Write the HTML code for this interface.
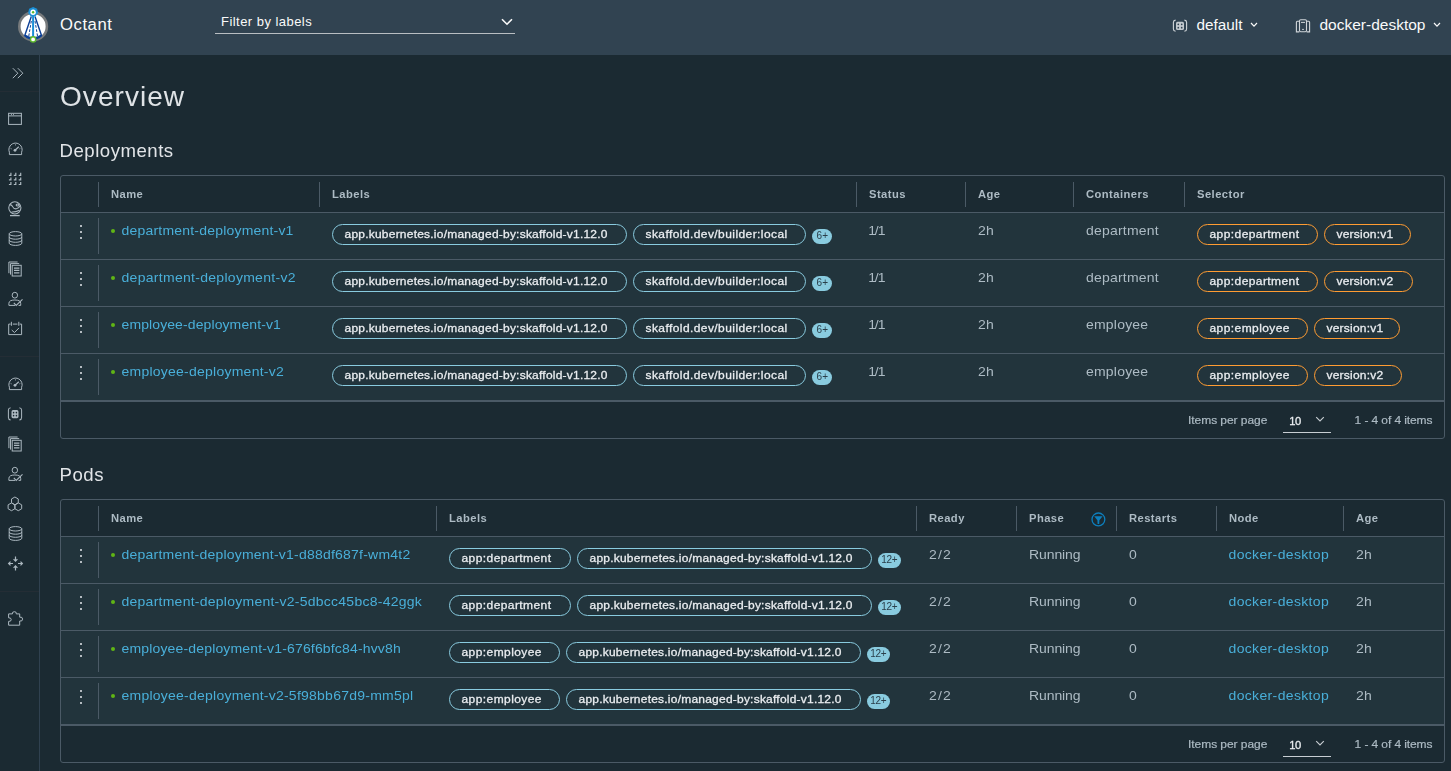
<!DOCTYPE html><html><head><meta charset="utf-8"><style>
html,body{margin:0;padding:0;}
body{width:1451px;height:771px;overflow:hidden;position:relative;background:#1b2a32;font-family:"Liberation Sans",sans-serif;}
.a{position:absolute;box-sizing:border-box;}
.t{position:absolute;white-space:nowrap;}
.chip{position:absolute;box-sizing:border-box;height:21px;border-radius:11px;border:1px solid #89cbdf;}
.badge{position:absolute;box-sizing:border-box;height:15px;border-radius:8px;background:#89cbdf;}
svg{position:absolute;overflow:visible;}
</style></head><body>
<div class="a" style="left:0px;top:0px;width:1451px;height:55px;background:#314351"></div>
<svg style="left:14px;top:4px" width="40" height="44" viewBox="0 0 40 44">
<circle cx="19.1" cy="22.4" r="13.8" fill="#fff" stroke="#777a7c" stroke-width="2.6"/>
<path d="M10.3 32.2 Q19.1 39.8 28 32.2 L27 30.6 Q19.1 35.6 11.3 30.6 Z" fill="#0b3f96"/>
<path d="M17.3 12.6 L10.6 32 M21 12.6 L27.7 32" stroke="#0b3f96" stroke-width="1.4" fill="none"/>
<path d="M17.3 17 L14.8 32 M21 17 L23.5 32" stroke="#0b3f96" stroke-width="1" stroke-dasharray="2.6 1.6" fill="none"/>
<line x1="19.1" y1="9" x2="19.1" y2="34" stroke="#1b8fd6" stroke-width="2"/>
<polygon points="19.1,2.9 23.1,4.8 24.1,9.1 21.3,12.5 16.9,12.5 14.1,9.1 15.1,4.8" fill="#1b8fd6"/>
<circle cx="19.1" cy="8.2" r="2.7" fill="#fff"/><circle cx="19.1" cy="8.2" r="1.2" fill="#5cb82c"/>
<circle cx="19.1" cy="35.4" r="2.6" fill="#fff" stroke="#5cb82c" stroke-width="1.4"/>
</svg>
<div class="t" style="left:60px;top:17.06px;font-size:16.7px;line-height:16.7px;color:#fafafa;font-weight:normal;letter-spacing:0.55px;">Octant</div>
<div class="t" style="left:221px;top:14.90px;font-size:13px;line-height:13px;color:#fafafa;font-weight:normal;letter-spacing:0.46px;">Filter by labels</div>
<div class="a" style="left:215px;top:33px;width:300px;height:1px;background:#b9bec2"></div>
<svg style="left:501px;top:18px" width="12" height="8" viewBox="0 0 12 8"><path d="M1 1.2 L6 6.2 L11 1.2" stroke="#fafafa" stroke-width="1.6" fill="none"/></svg>
<svg style="left:1168px;top:14px" width="24" height="22" viewBox="0 0 24 22" fill="none" stroke="#d0d5d9" stroke-width="1.1">
<path d="M7.6 6.1 Q5.4 6.4 5.4 8.2 V15 Q5.4 16.9 7.6 17.3 M16.4 6.1 Q18.6 6.4 18.6 8.2 V15 Q18.6 16.9 16.4 17.3"/>
<rect x="8" y="7.7" width="8" height="8.4" rx="1.6" fill="#c3c9ce" stroke="none"/>
<circle cx="10.3" cy="10.3" r="0.85" fill="#314351" stroke="none"/><circle cx="13.7" cy="10.3" r="0.85" fill="#314351" stroke="none"/>
<circle cx="10.3" cy="13.7" r="0.85" fill="#314351" stroke="none"/><circle cx="13.7" cy="13.7" r="0.85" fill="#314351" stroke="none"/>
</svg>
<div class="t" style="left:1196.5px;top:17.15px;font-size:15.3px;line-height:15.3px;color:#fafafa;font-weight:normal;letter-spacing:0px;">default</div>
<svg style="left:1250px;top:22px" width="8" height="6" viewBox="0 0 8 6"><path d="M1 1 L4 4.2 L7 1" stroke="#fafafa" stroke-width="1.2" fill="none"/></svg>
<svg style="left:1291px;top:14px" width="24" height="22" viewBox="0 0 24 22" fill="none" stroke="#d0d5d9" stroke-width="1.1">
<rect x="8.5" y="5.8" width="7" height="12" rx="1.2"/>
<path d="M10 8.4 H14" stroke-width="1"/>
<ellipse cx="12" cy="15.4" rx="0.9" ry="0.6" fill="#d0d5d9" stroke="none"/>
<path d="M8.4 7.2 H6.3 Q5.4 7.2 5.4 8.2 V17.9 H8.4 M15.6 7.2 H17.7 Q18.6 7.2 18.6 8.2 V17.9 H15.6"/>
</svg>
<div class="t" style="left:1319.5px;top:16.98px;font-size:15.5px;line-height:15.5px;color:#fafafa;font-weight:normal;letter-spacing:0px;">docker-desktop</div>
<svg style="left:1433px;top:22px" width="8" height="6" viewBox="0 0 8 6"><path d="M1 1 L4 4.2 L7 1" stroke="#fafafa" stroke-width="1.2" fill="none"/></svg>
<div style="position:absolute;left:0;top:0;width:1451px;height:771px;will-change:transform">
<div class="a" style="left:39px;top:55px;width:1px;height:716px;background:#304150"></div>
<div class="a" style="left:0px;top:91px;width:39px;height:1px;background:#242d35"></div>
<div class="a" style="left:0px;top:356px;width:39px;height:1px;background:#242d35"></div>
<div class="a" style="left:0px;top:591px;width:39px;height:1px;background:#242d35"></div>
<svg style="left:11px;top:66px" width="14" height="14" viewBox="0 0 14 14" fill="none" stroke="#acb8c0" stroke-width="1.0"><path d="M1.8 2.2 L6.8 7.2 L1.8 12.2 M6.8 2.2 L11.8 7.2 L6.8 12.2"/></svg>
<svg style="left:8px;top:112px" width="15" height="14" viewBox="0 0 15 14" fill="none" stroke="#acb8c0" stroke-width="1"><rect x="0.6" y="1.3" width="12.8" height="11.1"/><path d="M0.6 3.9 H13.4"/><path d="M3 2.6 H4 M5 2.6 H6" stroke-width="0.9"/></svg>
<svg style="left:8px;top:142px" width="15" height="14" viewBox="0 0 15 14" fill="none" stroke="#acb8c0" stroke-width="1"><path d="M1.4 12.6 V10.2 A6.6 6.6 0 1 1 13.6 10.2 V12.6 Z"/><path d="M2.6 6.3 L3.6 6.9 M12.4 6.3 L11.4 6.9 M7.5 2.4 V3.4" stroke-width="0.9"/><path d="M7 8.2 L10.8 4.8" stroke-width="1.2"/><circle cx="7" cy="8.3" r="1.4" fill="#acb8c0" stroke="none"/></svg>
<svg style="left:8px;top:171px" width="15" height="15" viewBox="0 0 15 15" fill="none" stroke="#acb8c0" stroke-width="1"><path d="M2.90 1.80 V4.30 H0.90" stroke-width="1.2"/><path d="M7.80 1.80 V4.30 H5.80" stroke-width="1.2"/><path d="M12.70 1.80 V4.30 H10.70" stroke-width="1.2"/><path d="M2.90 6.40 V8.90 H0.90" stroke-width="1.2"/><path d="M7.80 6.40 V8.90 H5.80" stroke-width="1.2"/><path d="M12.70 6.40 V8.90 H10.70" stroke-width="1.2"/><path d="M2.90 11.00 V13.50 H0.90" stroke-width="1.2"/><path d="M7.80 11.00 V13.50 H5.80" stroke-width="1.2"/><path d="M12.70 11.00 V13.50 H10.70" stroke-width="1.2"/></svg>
<svg style="left:8px;top:201px" width="15" height="16" viewBox="0 0 15 16" fill="none" stroke="#acb8c0" stroke-width="1.05"><circle cx="6.85" cy="6.85" r="6.1"/><path d="M1.6 3.6 Q3.6 3.6 4.6 5.6 Q5.8 8.2 8.4 7.8 Q11 7.3 12.3 4.6 M3.6 11 Q7.5 11.2 11.6 9.2"/><ellipse cx="9.6" cy="3.9" rx="1.5" ry="1"/><path d="M2 14.6 H11.7" stroke-width="1.3"/></svg>
<svg style="left:8px;top:231px" width="15" height="15" viewBox="0 0 15 15" fill="none" stroke="#acb8c0" stroke-width="1"><ellipse cx="7.5" cy="2.8" rx="6.3" ry="2.2"/><path d="M1.2 2.8 V12.2 A6.3 2.2 0 0 0 13.8 12.2 V2.8 M1.2 6 A6.3 2.2 0 0 0 13.8 6 M1.2 9.1 A6.3 2.2 0 0 0 13.8 9.1"/></svg>
<svg style="left:8px;top:261px" width="15" height="15" viewBox="0 0 15 15" fill="none" stroke="#acb8c0" stroke-width="1"><path d="M0.9 12.2 V1 H9.6 M2.5 13.6 V2.6 H11.2"/><rect x="4.2" y="4.3" width="9" height="10.7"/><path d="M6 7.1 H11.4 M6 9.4 H11.4 M6 11.8 H11.4" stroke-width="1.2"/></svg>
<svg style="left:8px;top:291px" width="15" height="15" viewBox="0 0 15 15" fill="none" stroke="#acb8c0" stroke-width="1"><ellipse cx="6.85" cy="4.2" rx="2.7" ry="2.9"/><path d="M7 14.4 H0.9 V12.4 Q0.9 9 6.85 9 Q12.7 9 12.7 12.4 V14.4 H10.6"/><path d="M5.8 11.8 L8.2 14.4 L14.5 8.3" stroke-width="1.1"/></svg>
<svg style="left:8px;top:321px" width="15" height="15" viewBox="0 0 15 15" fill="none" stroke="#acb8c0" stroke-width="1"><path d="M2.6 3.1 H0.7 V13.6 H13.6 V3.1 H11.7 M3.4 0.8 V4.8 M10.8 0.8 V4.8 M4.8 3.1 H9.4"/><path d="M3.7 9 L6.5 11.5 L11 6.9"/></svg>
<svg style="left:8px;top:377px" width="15" height="14" viewBox="0 0 15 14" fill="none" stroke="#acb8c0" stroke-width="1"><path d="M1.4 12.6 V10.2 A6.6 6.6 0 1 1 13.6 10.2 V12.6 Z"/><path d="M2.6 6.3 L3.6 6.9 M12.4 6.3 L11.4 6.9 M7.5 2.4 V3.4" stroke-width="0.9"/><path d="M7 8.2 L10.8 4.8" stroke-width="1.2"/><circle cx="7" cy="8.3" r="1.4" fill="#acb8c0" stroke="none"/></svg>
<svg style="left:3px;top:400.9px" width="24" height="24.2" viewBox="0 0 24 22" preserveAspectRatio="none" fill="none" stroke="#acb8c0" stroke-width="1.0"><path d="M7.6 6.1 Q5.4 6.4 5.4 8.2 V15 Q5.4 16.9 7.6 17.3 M16.4 6.1 Q18.6 6.4 18.6 8.2 V15 Q18.6 16.9 16.4 17.3"/><rect x="8.5" y="8.2" width="7" height="7.4" rx="1.5" fill="#acb8c0" stroke="none"/><circle cx="10.6" cy="10.5" r="0.8" fill="#1b2a32" stroke="none"/><circle cx="13.4" cy="10.5" r="0.8" fill="#1b2a32" stroke="none"/><circle cx="10.6" cy="13.3" r="0.8" fill="#1b2a32" stroke="none"/><circle cx="13.4" cy="13.3" r="0.8" fill="#1b2a32" stroke="none"/></svg>
<svg style="left:8px;top:436px" width="15" height="15" viewBox="0 0 15 15" fill="none" stroke="#acb8c0" stroke-width="1"><path d="M0.9 12.2 V1 H9.6 M2.5 13.6 V2.6 H11.2"/><rect x="4.2" y="4.3" width="9" height="10.7"/><path d="M6 7.1 H11.4 M6 9.4 H11.4 M6 11.8 H11.4" stroke-width="1.2"/></svg>
<svg style="left:8px;top:466px" width="15" height="15" viewBox="0 0 15 15" fill="none" stroke="#acb8c0" stroke-width="1"><ellipse cx="6.85" cy="4.2" rx="2.7" ry="2.9"/><path d="M7 14.4 H0.9 V12.4 Q0.9 9 6.85 9 Q12.7 9 12.7 12.4 V14.4 H10.6"/><path d="M5.8 11.8 L8.2 14.4 L14.5 8.3" stroke-width="1.1"/></svg>
<svg style="left:8px;top:496px" width="15" height="15" viewBox="0 0 15 15" fill="none" stroke="#acb8c0" stroke-width="1"><polygon points="6.90,8.80 3.52,6.85 3.52,2.95 6.90,1.00 10.28,2.95 10.28,6.85"/><polygon points="3.50,14.70 0.12,12.75 0.12,8.85 3.50,6.90 6.88,8.85 6.88,12.75"/><polygon points="10.30,14.70 6.92,12.75 6.92,8.85 10.30,6.90 13.68,8.85 13.68,12.75"/></svg>
<svg style="left:8px;top:526px" width="15" height="15" viewBox="0 0 15 15" fill="none" stroke="#acb8c0" stroke-width="1"><ellipse cx="7.5" cy="2.8" rx="6.3" ry="2.2"/><path d="M1.2 2.8 V12.2 A6.3 2.2 0 0 0 13.8 12.2 V2.8 M1.2 6 A6.3 2.2 0 0 0 13.8 6 M1.2 9.1 A6.3 2.2 0 0 0 13.8 9.1"/></svg>
<svg style="left:8px;top:556px" width="15" height="15" viewBox="0 0 15 15" fill="none" stroke="#acb8c0" stroke-width="1.2"><path d="M7.5 0.5 V5 M5.6 3.2 L7.5 5.1 L9.4 3.2 M7.5 14.5 V10 M5.6 11.8 L7.5 9.9 L9.4 11.8 M0.6 7.5 H5 M2.5 5.6 L0.6 7.5 L2.5 9.4 M14.4 7.5 H10 M12.5 5.6 L14.4 7.5 L12.5 9.4"/></svg>
<svg style="left:8px;top:611px" width="16" height="15" viewBox="0 0 16 15" fill="none" stroke="#acb8c0" stroke-width="1"><path d="M0.6 2.9 H4.4 Q4 0.7 6.4 0.7 Q8.8 0.7 8.3 2.9 H11.7 V6.2 Q14.6 5.6 14.6 8.1 Q14.6 10.6 11.7 10 V14.2 H0.6 V10.4 Q3.2 10.6 3.2 8.6 Q3.2 6.6 0.6 6.8 Z"/></svg>
<div class="t" style="left:60px;top:82.80px;font-size:28px;line-height:28px;color:#dfe3e6;font-weight:normal;letter-spacing:1.05px;">Overview</div>
<div class="t" style="left:59.6px;top:142.36px;font-size:18.6px;line-height:18.6px;color:#e2e5e8;font-weight:normal;letter-spacing:0.5px;">Deployments</div>
<div class="a" style="left:60px;top:175px;width:1385px;height:264px;border:1px solid #4b5a66;border-radius:3px;background:#1b2a32"></div>
<div class="a" style="left:61px;top:213px;width:1383px;height:188px;background:#22343c"></div>
<div class="a" style="left:61px;top:212px;width:1383px;height:1px;background:#4b5a66"></div>
<div class="a" style="left:98px;top:182px;width:1px;height:25px;background:#4b5a66"></div>
<div class="t" style="left:111px;top:189.12px;font-size:11.2px;line-height:11.2px;color:#adbbc4;font-weight:bold;letter-spacing:0.45px;">Name</div>
<div class="a" style="left:319px;top:182px;width:1px;height:25px;background:#4b5a66"></div>
<div class="t" style="left:332px;top:189.12px;font-size:11.2px;line-height:11.2px;color:#adbbc4;font-weight:bold;letter-spacing:0.45px;">Labels</div>
<div class="a" style="left:856px;top:182px;width:1px;height:25px;background:#4b5a66"></div>
<div class="t" style="left:869px;top:189.12px;font-size:11.2px;line-height:11.2px;color:#adbbc4;font-weight:bold;letter-spacing:0.45px;">Status</div>
<div class="a" style="left:965px;top:182px;width:1px;height:25px;background:#4b5a66"></div>
<div class="t" style="left:978px;top:189.12px;font-size:11.2px;line-height:11.2px;color:#adbbc4;font-weight:bold;letter-spacing:0.45px;">Age</div>
<div class="a" style="left:1073px;top:182px;width:1px;height:25px;background:#4b5a66"></div>
<div class="t" style="left:1086px;top:189.12px;font-size:11.2px;line-height:11.2px;color:#adbbc4;font-weight:bold;letter-spacing:0.45px;">Containers</div>
<div class="a" style="left:1184px;top:182px;width:1px;height:25px;background:#4b5a66"></div>
<div class="t" style="left:1197px;top:189.12px;font-size:11.2px;line-height:11.2px;color:#adbbc4;font-weight:bold;letter-spacing:0.45px;">Selector</div>
<div class="a" style="left:98px;top:182px;width:1px;height:25px;background:#4b5a66"></div>
<div class="a" style="left:61px;top:259px;width:1383px;height:1px;background:#4b5a66"></div>
<div class="a" style="left:98px;top:218px;width:1px;height:36px;background:#4b5a66"></div>
<div class="a" style="left:79.8px;top:225.1px;width:2.4px;height:2.4px;background:#e6e9ec;border-radius:50%"></div>
<div class="a" style="left:79.8px;top:230.85px;width:2.4px;height:2.4px;background:#e6e9ec;border-radius:50%"></div>
<div class="a" style="left:79.8px;top:236.6px;width:2.4px;height:2.4px;background:#e6e9ec;border-radius:50%"></div>
<div class="a" style="left:111px;top:229px;width:4px;height:4px;background:#60b515;border-radius:50%"></div><div class="t" style="left:121.5px;top:223.35px;font-size:14px;line-height:14px;color:#49afd9;font-weight:normal;letter-spacing:0.2px;transform:scaleY(0.88);transform-origin:0 11.85px;">department-deployment-v1</div>
<div class="chip" style="left:332px;top:224px;width:295px;border-color:#89cbdf"></div><div class="t" style="left:344.5px;top:227.74px;font-size:12px;line-height:12px;color:#eaedf0;font-weight:normal;letter-spacing:0.22px;-webkit-text-stroke:0.3px #eaedf0;transform:scaleY(0.86);transform-origin:0 10.16px">app.kubernetes.io/managed-by:skaffold-v1.12.0</div>
<div class="chip" style="left:633px;top:224px;width:173px;border-color:#89cbdf"></div><div class="t" style="left:645.5px;top:227.74px;font-size:12px;line-height:12px;color:#eaedf0;font-weight:normal;letter-spacing:0.42px;-webkit-text-stroke:0.3px #eaedf0;transform:scaleY(0.86);transform-origin:0 10.16px">skaffold.dev/builder:local</div>
<div class="badge" style="left:812px;top:229px;width:20px"></div><div class="t" style="left:816.6px;top:231.13px;font-size:10px;line-height:10px;color:#2a3f4a;font-weight:normal;letter-spacing:0px;">6+</div>
<div class="t" style="left:868.2px;top:223.35px;font-size:14px;line-height:14px;color:#adbbc4;font-weight:normal;letter-spacing:-1.1px;transform:scaleY(0.88);transform-origin:0 11.85px;">1/1</div>
<div class="t" style="left:978px;top:223.35px;font-size:14px;line-height:14px;color:#adbbc4;font-weight:normal;letter-spacing:0.2px;transform:scaleY(0.88);transform-origin:0 11.85px;">2h</div>
<div class="t" style="left:1086px;top:223.35px;font-size:14px;line-height:14px;color:#adbbc4;font-weight:normal;letter-spacing:0.2px;transform:scaleY(0.88);transform-origin:0 11.85px;">department</div>
<div class="chip" style="left:1197px;top:224px;width:121px;border-color:#ff9c32"></div><div class="t" style="left:1209.5px;top:227.74px;font-size:12px;line-height:12px;color:#eaedf0;font-weight:normal;letter-spacing:0.42px;-webkit-text-stroke:0.3px #eaedf0;transform:scaleY(0.86);transform-origin:0 10.16px">app:department</div>
<div class="chip" style="left:1324px;top:224px;width:87px;border-color:#ff9c32"></div><div class="t" style="left:1336.5px;top:227.74px;font-size:12px;line-height:12px;color:#eaedf0;font-weight:normal;letter-spacing:0.22px;-webkit-text-stroke:0.3px #eaedf0;transform:scaleY(0.86);transform-origin:0 10.16px">version:v1</div>
<div class="a" style="left:61px;top:306px;width:1383px;height:1px;background:#4b5a66"></div>
<div class="a" style="left:98px;top:265px;width:1px;height:36px;background:#4b5a66"></div>
<div class="a" style="left:79.8px;top:272.1px;width:2.4px;height:2.4px;background:#e6e9ec;border-radius:50%"></div>
<div class="a" style="left:79.8px;top:277.85px;width:2.4px;height:2.4px;background:#e6e9ec;border-radius:50%"></div>
<div class="a" style="left:79.8px;top:283.6px;width:2.4px;height:2.4px;background:#e6e9ec;border-radius:50%"></div>
<div class="a" style="left:111px;top:276px;width:4px;height:4px;background:#60b515;border-radius:50%"></div><div class="t" style="left:121.5px;top:270.35px;font-size:14px;line-height:14px;color:#49afd9;font-weight:normal;letter-spacing:0.29px;transform:scaleY(0.88);transform-origin:0 11.85px;">department-deployment-v2</div>
<div class="chip" style="left:332px;top:271px;width:295px;border-color:#89cbdf"></div><div class="t" style="left:344.5px;top:274.74px;font-size:12px;line-height:12px;color:#eaedf0;font-weight:normal;letter-spacing:0.22px;-webkit-text-stroke:0.3px #eaedf0;transform:scaleY(0.86);transform-origin:0 10.16px">app.kubernetes.io/managed-by:skaffold-v1.12.0</div>
<div class="chip" style="left:633px;top:271px;width:173px;border-color:#89cbdf"></div><div class="t" style="left:645.5px;top:274.74px;font-size:12px;line-height:12px;color:#eaedf0;font-weight:normal;letter-spacing:0.42px;-webkit-text-stroke:0.3px #eaedf0;transform:scaleY(0.86);transform-origin:0 10.16px">skaffold.dev/builder:local</div>
<div class="badge" style="left:812px;top:276px;width:20px"></div><div class="t" style="left:816.6px;top:278.14px;font-size:10px;line-height:10px;color:#2a3f4a;font-weight:normal;letter-spacing:0px;">6+</div>
<div class="t" style="left:868.2px;top:270.35px;font-size:14px;line-height:14px;color:#adbbc4;font-weight:normal;letter-spacing:-1.1px;transform:scaleY(0.88);transform-origin:0 11.85px;">1/1</div>
<div class="t" style="left:978px;top:270.35px;font-size:14px;line-height:14px;color:#adbbc4;font-weight:normal;letter-spacing:0.2px;transform:scaleY(0.88);transform-origin:0 11.85px;">2h</div>
<div class="t" style="left:1086px;top:270.35px;font-size:14px;line-height:14px;color:#adbbc4;font-weight:normal;letter-spacing:0.2px;transform:scaleY(0.88);transform-origin:0 11.85px;">department</div>
<div class="chip" style="left:1197px;top:271px;width:121px;border-color:#ff9c32"></div><div class="t" style="left:1209.5px;top:274.74px;font-size:12px;line-height:12px;color:#eaedf0;font-weight:normal;letter-spacing:0.42px;-webkit-text-stroke:0.3px #eaedf0;transform:scaleY(0.86);transform-origin:0 10.16px">app:department</div>
<div class="chip" style="left:1324px;top:271px;width:89px;border-color:#ff9c32"></div><div class="t" style="left:1336.5px;top:274.74px;font-size:12px;line-height:12px;color:#eaedf0;font-weight:normal;letter-spacing:0.22px;-webkit-text-stroke:0.3px #eaedf0;transform:scaleY(0.86);transform-origin:0 10.16px">version:v2</div>
<div class="a" style="left:61px;top:353px;width:1383px;height:1px;background:#4b5a66"></div>
<div class="a" style="left:98px;top:312px;width:1px;height:36px;background:#4b5a66"></div>
<div class="a" style="left:79.8px;top:319.1px;width:2.4px;height:2.4px;background:#e6e9ec;border-radius:50%"></div>
<div class="a" style="left:79.8px;top:324.85px;width:2.4px;height:2.4px;background:#e6e9ec;border-radius:50%"></div>
<div class="a" style="left:79.8px;top:330.6px;width:2.4px;height:2.4px;background:#e6e9ec;border-radius:50%"></div>
<div class="a" style="left:111px;top:323px;width:4px;height:4px;background:#60b515;border-radius:50%"></div><div class="t" style="left:121.5px;top:317.35px;font-size:14px;line-height:14px;color:#49afd9;font-weight:normal;letter-spacing:0.1px;transform:scaleY(0.88);transform-origin:0 11.85px;">employee-deployment-v1</div>
<div class="chip" style="left:332px;top:318px;width:295px;border-color:#89cbdf"></div><div class="t" style="left:344.5px;top:321.74px;font-size:12px;line-height:12px;color:#eaedf0;font-weight:normal;letter-spacing:0.22px;-webkit-text-stroke:0.3px #eaedf0;transform:scaleY(0.86);transform-origin:0 10.16px">app.kubernetes.io/managed-by:skaffold-v1.12.0</div>
<div class="chip" style="left:633px;top:318px;width:173px;border-color:#89cbdf"></div><div class="t" style="left:645.5px;top:321.74px;font-size:12px;line-height:12px;color:#eaedf0;font-weight:normal;letter-spacing:0.42px;-webkit-text-stroke:0.3px #eaedf0;transform:scaleY(0.86);transform-origin:0 10.16px">skaffold.dev/builder:local</div>
<div class="badge" style="left:812px;top:323px;width:20px"></div><div class="t" style="left:816.6px;top:325.14px;font-size:10px;line-height:10px;color:#2a3f4a;font-weight:normal;letter-spacing:0px;">6+</div>
<div class="t" style="left:868.2px;top:317.35px;font-size:14px;line-height:14px;color:#adbbc4;font-weight:normal;letter-spacing:-1.1px;transform:scaleY(0.88);transform-origin:0 11.85px;">1/1</div>
<div class="t" style="left:978px;top:317.35px;font-size:14px;line-height:14px;color:#adbbc4;font-weight:normal;letter-spacing:0.2px;transform:scaleY(0.88);transform-origin:0 11.85px;">2h</div>
<div class="t" style="left:1086px;top:317.35px;font-size:14px;line-height:14px;color:#adbbc4;font-weight:normal;letter-spacing:0.2px;transform:scaleY(0.88);transform-origin:0 11.85px;">employee</div>
<div class="chip" style="left:1197px;top:318px;width:111px;border-color:#ff9c32"></div><div class="t" style="left:1209.5px;top:321.74px;font-size:12px;line-height:12px;color:#eaedf0;font-weight:normal;letter-spacing:0.42px;-webkit-text-stroke:0.3px #eaedf0;transform:scaleY(0.86);transform-origin:0 10.16px">app:employee</div>
<div class="chip" style="left:1314px;top:318px;width:86px;border-color:#ff9c32"></div><div class="t" style="left:1326.5px;top:321.74px;font-size:12px;line-height:12px;color:#eaedf0;font-weight:normal;letter-spacing:0.22px;-webkit-text-stroke:0.3px #eaedf0;transform:scaleY(0.86);transform-origin:0 10.16px">version:v1</div>
<div class="a" style="left:61px;top:400px;width:1383px;height:1px;background:#4b5a66"></div>
<div class="a" style="left:98px;top:359px;width:1px;height:36px;background:#4b5a66"></div>
<div class="a" style="left:79.8px;top:366.1px;width:2.4px;height:2.4px;background:#e6e9ec;border-radius:50%"></div>
<div class="a" style="left:79.8px;top:371.85px;width:2.4px;height:2.4px;background:#e6e9ec;border-radius:50%"></div>
<div class="a" style="left:79.8px;top:377.6px;width:2.4px;height:2.4px;background:#e6e9ec;border-radius:50%"></div>
<div class="a" style="left:111px;top:370px;width:4px;height:4px;background:#60b515;border-radius:50%"></div><div class="t" style="left:121.5px;top:364.35px;font-size:14px;line-height:14px;color:#49afd9;font-weight:normal;letter-spacing:0.24px;transform:scaleY(0.88);transform-origin:0 11.85px;">employee-deployment-v2</div>
<div class="chip" style="left:332px;top:365px;width:295px;border-color:#89cbdf"></div><div class="t" style="left:344.5px;top:368.74px;font-size:12px;line-height:12px;color:#eaedf0;font-weight:normal;letter-spacing:0.22px;-webkit-text-stroke:0.3px #eaedf0;transform:scaleY(0.86);transform-origin:0 10.16px">app.kubernetes.io/managed-by:skaffold-v1.12.0</div>
<div class="chip" style="left:633px;top:365px;width:173px;border-color:#89cbdf"></div><div class="t" style="left:645.5px;top:368.74px;font-size:12px;line-height:12px;color:#eaedf0;font-weight:normal;letter-spacing:0.42px;-webkit-text-stroke:0.3px #eaedf0;transform:scaleY(0.86);transform-origin:0 10.16px">skaffold.dev/builder:local</div>
<div class="badge" style="left:812px;top:370px;width:20px"></div><div class="t" style="left:816.6px;top:372.14px;font-size:10px;line-height:10px;color:#2a3f4a;font-weight:normal;letter-spacing:0px;">6+</div>
<div class="t" style="left:868.2px;top:364.35px;font-size:14px;line-height:14px;color:#adbbc4;font-weight:normal;letter-spacing:-1.1px;transform:scaleY(0.88);transform-origin:0 11.85px;">1/1</div>
<div class="t" style="left:978px;top:364.35px;font-size:14px;line-height:14px;color:#adbbc4;font-weight:normal;letter-spacing:0.2px;transform:scaleY(0.88);transform-origin:0 11.85px;">2h</div>
<div class="t" style="left:1086px;top:364.35px;font-size:14px;line-height:14px;color:#adbbc4;font-weight:normal;letter-spacing:0.2px;transform:scaleY(0.88);transform-origin:0 11.85px;">employee</div>
<div class="chip" style="left:1197px;top:365px;width:111px;border-color:#ff9c32"></div><div class="t" style="left:1209.5px;top:368.74px;font-size:12px;line-height:12px;color:#eaedf0;font-weight:normal;letter-spacing:0.42px;-webkit-text-stroke:0.3px #eaedf0;transform:scaleY(0.86);transform-origin:0 10.16px">app:employee</div>
<div class="chip" style="left:1314px;top:365px;width:88px;border-color:#ff9c32"></div><div class="t" style="left:1326.5px;top:368.74px;font-size:12px;line-height:12px;color:#eaedf0;font-weight:normal;letter-spacing:0.22px;-webkit-text-stroke:0.3px #eaedf0;transform:scaleY(0.86);transform-origin:0 10.16px">version:v2</div>
<div class="a" style="left:61px;top:401px;width:1383px;height:1px;background:#4b5a66"></div>
<div class="t" style="left:1188px;top:414.34px;font-size:12px;line-height:12px;color:#adbbc4;font-weight:normal;letter-spacing:-0.05px;-webkit-text-stroke:0.2px #adbbc4;transform:scaleY(0.9);transform-origin:0 10.16px;">Items per page</div>
<div class="t" style="left:1289.3px;top:415.82px;font-size:11.2px;line-height:11.2px;color:#eaedf0;font-weight:normal;letter-spacing:-0.4px;-webkit-text-stroke:0.3px #eaedf0">10</div>
<svg style="left:1315px;top:416px" width="10" height="7" viewBox="0 0 10 7"><path d="M1.2 1.2 L5 5 L8.8 1.2" stroke="#c8ced3" stroke-width="1.1" fill="none"/></svg>
<div class="a" style="left:1283px;top:432px;width:48px;height:1px;background:#c8ced3"></div>
<div class="t" style="left:1354.6px;top:414.34px;font-size:12px;line-height:12px;color:#adbbc4;font-weight:normal;letter-spacing:-0.1px;-webkit-text-stroke:0.2px #adbbc4;transform:scaleY(0.9);transform-origin:0 10.16px;">1 - 4 of 4 items</div>
<div class="t" style="left:59.6px;top:466.36px;font-size:18.6px;line-height:18.6px;color:#e2e5e8;font-weight:normal;letter-spacing:0.5px;">Pods</div>
<div class="a" style="left:60px;top:499px;width:1385px;height:264px;border:1px solid #4b5a66;border-radius:3px;background:#1b2a32"></div>
<div class="a" style="left:61px;top:537px;width:1383px;height:188px;background:#22343c"></div>
<div class="a" style="left:61px;top:536px;width:1383px;height:1px;background:#4b5a66"></div>
<div class="a" style="left:98px;top:506px;width:1px;height:25px;background:#4b5a66"></div>
<div class="t" style="left:111px;top:513.12px;font-size:11.2px;line-height:11.2px;color:#adbbc4;font-weight:bold;letter-spacing:0.45px;">Name</div>
<div class="a" style="left:436px;top:506px;width:1px;height:25px;background:#4b5a66"></div>
<div class="t" style="left:449px;top:513.12px;font-size:11.2px;line-height:11.2px;color:#adbbc4;font-weight:bold;letter-spacing:0.45px;">Labels</div>
<div class="a" style="left:916px;top:506px;width:1px;height:25px;background:#4b5a66"></div>
<div class="t" style="left:929px;top:513.12px;font-size:11.2px;line-height:11.2px;color:#adbbc4;font-weight:bold;letter-spacing:0.45px;">Ready</div>
<div class="a" style="left:1016px;top:506px;width:1px;height:25px;background:#4b5a66"></div>
<div class="t" style="left:1029px;top:513.12px;font-size:11.2px;line-height:11.2px;color:#adbbc4;font-weight:bold;letter-spacing:0.45px;">Phase</div>
<div class="a" style="left:1116px;top:506px;width:1px;height:25px;background:#4b5a66"></div>
<div class="t" style="left:1129px;top:513.12px;font-size:11.2px;line-height:11.2px;color:#adbbc4;font-weight:bold;letter-spacing:0.45px;">Restarts</div>
<div class="a" style="left:1216px;top:506px;width:1px;height:25px;background:#4b5a66"></div>
<div class="t" style="left:1229px;top:513.12px;font-size:11.2px;line-height:11.2px;color:#adbbc4;font-weight:bold;letter-spacing:0.45px;">Node</div>
<div class="a" style="left:1343px;top:506px;width:1px;height:25px;background:#4b5a66"></div>
<div class="t" style="left:1356px;top:513.12px;font-size:11.2px;line-height:11.2px;color:#adbbc4;font-weight:bold;letter-spacing:0.45px;">Age</div>
<div class="a" style="left:98px;top:506px;width:1px;height:25px;background:#4b5a66"></div>
<div class="a" style="left:61px;top:583px;width:1383px;height:1px;background:#4b5a66"></div>
<div class="a" style="left:98px;top:542px;width:1px;height:36px;background:#4b5a66"></div>
<div class="a" style="left:79.8px;top:549.1px;width:2.4px;height:2.4px;background:#e6e9ec;border-radius:50%"></div>
<div class="a" style="left:79.8px;top:554.85px;width:2.4px;height:2.4px;background:#e6e9ec;border-radius:50%"></div>
<div class="a" style="left:79.8px;top:560.6px;width:2.4px;height:2.4px;background:#e6e9ec;border-radius:50%"></div>
<div class="a" style="left:111px;top:553px;width:4px;height:4px;background:#60b515;border-radius:50%"></div><div class="t" style="left:121.5px;top:547.35px;font-size:14px;line-height:14px;color:#49afd9;font-weight:normal;letter-spacing:0.22px;transform:scaleY(0.88);transform-origin:0 11.85px;">department-deployment-v1-d88df687f-wm4t2</div>
<div class="chip" style="left:449px;top:548px;width:122px;border-color:#89cbdf"></div><div class="t" style="left:461.5px;top:551.74px;font-size:12px;line-height:12px;color:#eaedf0;font-weight:normal;letter-spacing:0.42px;-webkit-text-stroke:0.3px #eaedf0;transform:scaleY(0.86);transform-origin:0 10.16px">app:department</div>
<div class="chip" style="left:577px;top:548px;width:295px;border-color:#89cbdf"></div><div class="t" style="left:589.5px;top:551.74px;font-size:12px;line-height:12px;color:#eaedf0;font-weight:normal;letter-spacing:0.22px;-webkit-text-stroke:0.3px #eaedf0;transform:scaleY(0.86);transform-origin:0 10.16px">app.kubernetes.io/managed-by:skaffold-v1.12.0</div>
<div class="badge" style="left:878px;top:553px;width:23px"></div><div class="t" style="left:881.2px;top:555.13px;font-size:10px;line-height:10px;color:#2a3f4a;font-weight:normal;letter-spacing:-0.3px;">12+</div>
<div class="t" style="left:929px;top:547.35px;font-size:14px;line-height:14px;color:#adbbc4;font-weight:normal;letter-spacing:1.1px;transform:scaleY(0.88);transform-origin:0 11.85px;">2/2</div>
<div class="t" style="left:1029px;top:547.35px;font-size:14px;line-height:14px;color:#adbbc4;font-weight:normal;letter-spacing:-0.1px;transform:scaleY(0.88);transform-origin:0 11.85px;">Running</div>
<div class="t" style="left:1129px;top:547.35px;font-size:14px;line-height:14px;color:#adbbc4;font-weight:normal;letter-spacing:0.2px;transform:scaleY(0.88);transform-origin:0 11.85px;">0</div>
<div class="t" style="left:1228.5px;top:547.35px;font-size:14px;line-height:14px;color:#49afd9;font-weight:normal;letter-spacing:0.35px;transform:scaleY(0.88);transform-origin:0 11.85px;">docker-desktop</div>
<div class="t" style="left:1356px;top:547.35px;font-size:14px;line-height:14px;color:#adbbc4;font-weight:normal;letter-spacing:0.2px;transform:scaleY(0.88);transform-origin:0 11.85px;">2h</div>
<div class="a" style="left:61px;top:630px;width:1383px;height:1px;background:#4b5a66"></div>
<div class="a" style="left:98px;top:589px;width:1px;height:36px;background:#4b5a66"></div>
<div class="a" style="left:79.8px;top:596.1px;width:2.4px;height:2.4px;background:#e6e9ec;border-radius:50%"></div>
<div class="a" style="left:79.8px;top:601.85px;width:2.4px;height:2.4px;background:#e6e9ec;border-radius:50%"></div>
<div class="a" style="left:79.8px;top:607.6px;width:2.4px;height:2.4px;background:#e6e9ec;border-radius:50%"></div>
<div class="a" style="left:111px;top:600px;width:4px;height:4px;background:#60b515;border-radius:50%"></div><div class="t" style="left:121.5px;top:594.35px;font-size:14px;line-height:14px;color:#49afd9;font-weight:normal;letter-spacing:0.25px;transform:scaleY(0.88);transform-origin:0 11.85px;">department-deployment-v2-5dbcc45bc8-42ggk</div>
<div class="chip" style="left:449px;top:595px;width:122px;border-color:#89cbdf"></div><div class="t" style="left:461.5px;top:598.74px;font-size:12px;line-height:12px;color:#eaedf0;font-weight:normal;letter-spacing:0.42px;-webkit-text-stroke:0.3px #eaedf0;transform:scaleY(0.86);transform-origin:0 10.16px">app:department</div>
<div class="chip" style="left:577px;top:595px;width:295px;border-color:#89cbdf"></div><div class="t" style="left:589.5px;top:598.74px;font-size:12px;line-height:12px;color:#eaedf0;font-weight:normal;letter-spacing:0.22px;-webkit-text-stroke:0.3px #eaedf0;transform:scaleY(0.86);transform-origin:0 10.16px">app.kubernetes.io/managed-by:skaffold-v1.12.0</div>
<div class="badge" style="left:878px;top:600px;width:23px"></div><div class="t" style="left:881.2px;top:602.13px;font-size:10px;line-height:10px;color:#2a3f4a;font-weight:normal;letter-spacing:-0.3px;">12+</div>
<div class="t" style="left:929px;top:594.35px;font-size:14px;line-height:14px;color:#adbbc4;font-weight:normal;letter-spacing:1.1px;transform:scaleY(0.88);transform-origin:0 11.85px;">2/2</div>
<div class="t" style="left:1029px;top:594.35px;font-size:14px;line-height:14px;color:#adbbc4;font-weight:normal;letter-spacing:-0.1px;transform:scaleY(0.88);transform-origin:0 11.85px;">Running</div>
<div class="t" style="left:1129px;top:594.35px;font-size:14px;line-height:14px;color:#adbbc4;font-weight:normal;letter-spacing:0.2px;transform:scaleY(0.88);transform-origin:0 11.85px;">0</div>
<div class="t" style="left:1228.5px;top:594.35px;font-size:14px;line-height:14px;color:#49afd9;font-weight:normal;letter-spacing:0.35px;transform:scaleY(0.88);transform-origin:0 11.85px;">docker-desktop</div>
<div class="t" style="left:1356px;top:594.35px;font-size:14px;line-height:14px;color:#adbbc4;font-weight:normal;letter-spacing:0.2px;transform:scaleY(0.88);transform-origin:0 11.85px;">2h</div>
<div class="a" style="left:61px;top:677px;width:1383px;height:1px;background:#4b5a66"></div>
<div class="a" style="left:98px;top:636px;width:1px;height:36px;background:#4b5a66"></div>
<div class="a" style="left:79.8px;top:643.1px;width:2.4px;height:2.4px;background:#e6e9ec;border-radius:50%"></div>
<div class="a" style="left:79.8px;top:648.85px;width:2.4px;height:2.4px;background:#e6e9ec;border-radius:50%"></div>
<div class="a" style="left:79.8px;top:654.6px;width:2.4px;height:2.4px;background:#e6e9ec;border-radius:50%"></div>
<div class="a" style="left:111px;top:647px;width:4px;height:4px;background:#60b515;border-radius:50%"></div><div class="t" style="left:121.5px;top:641.35px;font-size:14px;line-height:14px;color:#49afd9;font-weight:normal;letter-spacing:0.16px;transform:scaleY(0.88);transform-origin:0 11.85px;">employee-deployment-v1-676f6bfc84-hvv8h</div>
<div class="chip" style="left:449px;top:642px;width:111px;border-color:#89cbdf"></div><div class="t" style="left:461.5px;top:645.74px;font-size:12px;line-height:12px;color:#eaedf0;font-weight:normal;letter-spacing:0.42px;-webkit-text-stroke:0.3px #eaedf0;transform:scaleY(0.86);transform-origin:0 10.16px">app:employee</div>
<div class="chip" style="left:566px;top:642px;width:295px;border-color:#89cbdf"></div><div class="t" style="left:578.5px;top:645.74px;font-size:12px;line-height:12px;color:#eaedf0;font-weight:normal;letter-spacing:0.22px;-webkit-text-stroke:0.3px #eaedf0;transform:scaleY(0.86);transform-origin:0 10.16px">app.kubernetes.io/managed-by:skaffold-v1.12.0</div>
<div class="badge" style="left:867px;top:647px;width:23px"></div><div class="t" style="left:870.2px;top:649.13px;font-size:10px;line-height:10px;color:#2a3f4a;font-weight:normal;letter-spacing:-0.3px;">12+</div>
<div class="t" style="left:929px;top:641.35px;font-size:14px;line-height:14px;color:#adbbc4;font-weight:normal;letter-spacing:1.1px;transform:scaleY(0.88);transform-origin:0 11.85px;">2/2</div>
<div class="t" style="left:1029px;top:641.35px;font-size:14px;line-height:14px;color:#adbbc4;font-weight:normal;letter-spacing:-0.1px;transform:scaleY(0.88);transform-origin:0 11.85px;">Running</div>
<div class="t" style="left:1129px;top:641.35px;font-size:14px;line-height:14px;color:#adbbc4;font-weight:normal;letter-spacing:0.2px;transform:scaleY(0.88);transform-origin:0 11.85px;">0</div>
<div class="t" style="left:1228.5px;top:641.35px;font-size:14px;line-height:14px;color:#49afd9;font-weight:normal;letter-spacing:0.35px;transform:scaleY(0.88);transform-origin:0 11.85px;">docker-desktop</div>
<div class="t" style="left:1356px;top:641.35px;font-size:14px;line-height:14px;color:#adbbc4;font-weight:normal;letter-spacing:0.2px;transform:scaleY(0.88);transform-origin:0 11.85px;">2h</div>
<div class="a" style="left:61px;top:724px;width:1383px;height:1px;background:#4b5a66"></div>
<div class="a" style="left:98px;top:683px;width:1px;height:36px;background:#4b5a66"></div>
<div class="a" style="left:79.8px;top:690.1px;width:2.4px;height:2.4px;background:#e6e9ec;border-radius:50%"></div>
<div class="a" style="left:79.8px;top:695.85px;width:2.4px;height:2.4px;background:#e6e9ec;border-radius:50%"></div>
<div class="a" style="left:79.8px;top:701.6px;width:2.4px;height:2.4px;background:#e6e9ec;border-radius:50%"></div>
<div class="a" style="left:111px;top:694px;width:4px;height:4px;background:#60b515;border-radius:50%"></div><div class="t" style="left:121.5px;top:688.35px;font-size:14px;line-height:14px;color:#49afd9;font-weight:normal;letter-spacing:0.24px;transform:scaleY(0.88);transform-origin:0 11.85px;">employee-deployment-v2-5f98bb67d9-mm5pl</div>
<div class="chip" style="left:449px;top:689px;width:111px;border-color:#89cbdf"></div><div class="t" style="left:461.5px;top:692.74px;font-size:12px;line-height:12px;color:#eaedf0;font-weight:normal;letter-spacing:0.42px;-webkit-text-stroke:0.3px #eaedf0;transform:scaleY(0.86);transform-origin:0 10.16px">app:employee</div>
<div class="chip" style="left:566px;top:689px;width:295px;border-color:#89cbdf"></div><div class="t" style="left:578.5px;top:692.74px;font-size:12px;line-height:12px;color:#eaedf0;font-weight:normal;letter-spacing:0.22px;-webkit-text-stroke:0.3px #eaedf0;transform:scaleY(0.86);transform-origin:0 10.16px">app.kubernetes.io/managed-by:skaffold-v1.12.0</div>
<div class="badge" style="left:867px;top:694px;width:23px"></div><div class="t" style="left:870.2px;top:696.13px;font-size:10px;line-height:10px;color:#2a3f4a;font-weight:normal;letter-spacing:-0.3px;">12+</div>
<div class="t" style="left:929px;top:688.35px;font-size:14px;line-height:14px;color:#adbbc4;font-weight:normal;letter-spacing:1.1px;transform:scaleY(0.88);transform-origin:0 11.85px;">2/2</div>
<div class="t" style="left:1029px;top:688.35px;font-size:14px;line-height:14px;color:#adbbc4;font-weight:normal;letter-spacing:-0.1px;transform:scaleY(0.88);transform-origin:0 11.85px;">Running</div>
<div class="t" style="left:1129px;top:688.35px;font-size:14px;line-height:14px;color:#adbbc4;font-weight:normal;letter-spacing:0.2px;transform:scaleY(0.88);transform-origin:0 11.85px;">0</div>
<div class="t" style="left:1228.5px;top:688.35px;font-size:14px;line-height:14px;color:#49afd9;font-weight:normal;letter-spacing:0.35px;transform:scaleY(0.88);transform-origin:0 11.85px;">docker-desktop</div>
<div class="t" style="left:1356px;top:688.35px;font-size:14px;line-height:14px;color:#adbbc4;font-weight:normal;letter-spacing:0.2px;transform:scaleY(0.88);transform-origin:0 11.85px;">2h</div>
<div class="a" style="left:61px;top:725px;width:1383px;height:1px;background:#4b5a66"></div>
<div class="t" style="left:1188px;top:738.34px;font-size:12px;line-height:12px;color:#adbbc4;font-weight:normal;letter-spacing:-0.05px;-webkit-text-stroke:0.2px #adbbc4;transform:scaleY(0.9);transform-origin:0 10.16px;">Items per page</div>
<div class="t" style="left:1289.3px;top:739.82px;font-size:11.2px;line-height:11.2px;color:#eaedf0;font-weight:normal;letter-spacing:-0.4px;-webkit-text-stroke:0.3px #eaedf0">10</div>
<svg style="left:1315px;top:740px" width="10" height="7" viewBox="0 0 10 7"><path d="M1.2 1.2 L5 5 L8.8 1.2" stroke="#c8ced3" stroke-width="1.1" fill="none"/></svg>
<div class="a" style="left:1283px;top:756px;width:48px;height:1px;background:#c8ced3"></div>
<div class="t" style="left:1354.6px;top:738.34px;font-size:12px;line-height:12px;color:#adbbc4;font-weight:normal;letter-spacing:-0.1px;-webkit-text-stroke:0.2px #adbbc4;transform:scaleY(0.9);transform-origin:0 10.16px;">1 - 4 of 4 items</div>
<svg style="left:1090.5px;top:511.6px" width="15" height="15" viewBox="0 0 15 15">
<circle cx="7.4" cy="7.4" r="6.4" fill="none" stroke="#0d7fbd" stroke-width="1.3"/>
<path d="M3.2 4.3 H11.6 L8.4 8.2 L8.2 12.1 L6.6 12.1 L6.4 8.2 Z" fill="#0d7fbd"/>
</svg>
</div></body></html>
